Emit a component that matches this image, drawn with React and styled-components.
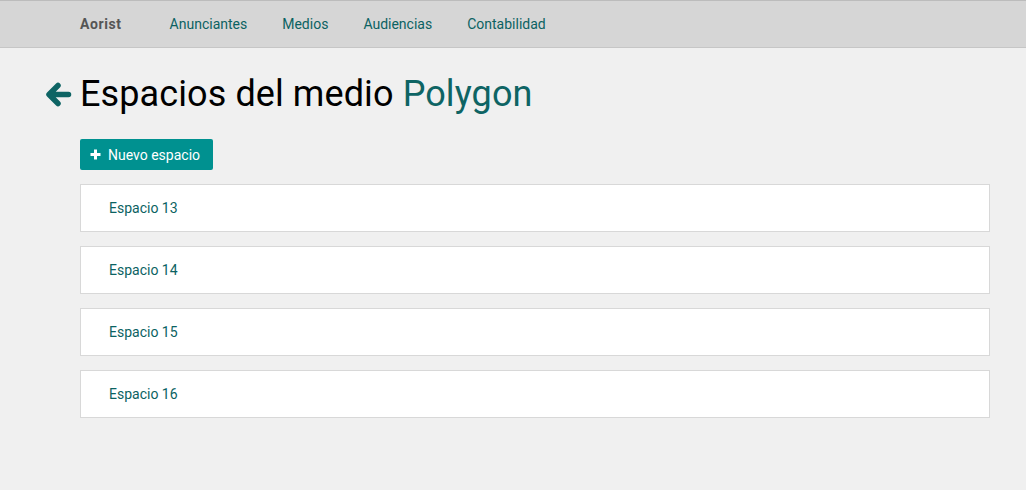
import styled, { createGlobalStyle } from "styled-components";

const GlobalStyle = createGlobalStyle`
  html, body {
    margin: 0;
    padding: 0;
    background: #f0f0f0;
    font-family: Roboto, "Liberation Sans", sans-serif;
  }
`;

const Navbar = styled.nav`
  height: 46px;
  background: #d6d6d6;
  border-top: 1px solid #bcbcbc;
  border-bottom: 1px solid #c6c6c6;
  display: flex;
  align-items: center;
  padding-left: 80px;
  font-size: 14px;
`;

const Brand = styled.span`
  color: #555;
  font-weight: 700;
  letter-spacing: 0.6px;
  margin-right: 48px;
`;

const NavLink = styled.a`
  color: #0b6262;
  text-decoration: none;
  margin-right: 35px;
`;

const Main = styled.main`
  padding: 24px 36px 0 45px;
`;

const Title = styled.h1`
  display: flex;
  align-items: center;
  gap: 8px;
  margin: 0;
  font-size: 36px;
  letter-spacing: 0.1px;
  font-weight: 400;
  color: #000;
  height: 44px;
`;

const Accent = styled.span`
  color: #0e6464;
`;

const Content = styled.div`
  padding-left: 35px;
  margin-top: 23px;
  display: flex;
  flex-direction: column;
  gap: 14px;
`;

const Button = styled.button`
  align-self: flex-start;
  display: flex;
  align-items: center;
  gap: 7px;
  height: 31px;
  padding: 0 13px 0 10px;
  border: none;
  border-radius: 2px;
  background: #009190;
  color: #fff;
  font-family: inherit;
  font-size: 14px;
`;

const List = styled.div`
  display: flex;
  flex-direction: column;
  gap: 14px;
`;

const Card = styled.div`
  height: 46px;
  background: #fff;
  border: 1px solid #d8d8d8;
  display: flex;
  align-items: center;
  padding-left: 28px;
  font-size: 14px;
  color: #0b6262;
`;

const BackArrow = () => (
  <svg width="27" height="27" viewBox="0 0 27 27">
    <path
      d="M23.5 13.5H5 M13 4.5 L4 13.5 L13 22.5"
      fill="none"
      stroke="#0e6464"
      strokeWidth="5.5"
      strokeLinecap="round"
      strokeLinejoin="round"
    />
  </svg>
);

const Plus = () => (
  <svg width="11" height="11" viewBox="0 0 11 11">
    <path d="M5.5 0.5v10 M0.5 5.5h10" stroke="#fff" strokeWidth="3" />
  </svg>
);

const espacios = ["Espacio 13", "Espacio 14", "Espacio 15", "Espacio 16"];

export default function App() {
  return (
    <>
      <GlobalStyle />
      <Navbar>
        <Brand>Aorist</Brand>
        <NavLink>Anunciantes</NavLink>
        <NavLink>Medios</NavLink>
        <NavLink>Audiencias</NavLink>
        <NavLink>Contabilidad</NavLink>
      </Navbar>
      <Main>
        <Title>
          <BackArrow />
          <span>
            Espacios del medio <Accent>Polygon</Accent>
          </span>
        </Title>
        <Content>
          <Button>
            <Plus />
            Nuevo espacio
          </Button>
          <List>
            {espacios.map((e) => (
              <Card key={e}>{e}</Card>
            ))}
          </List>
        </Content>
      </Main>
    </>
  );
}
